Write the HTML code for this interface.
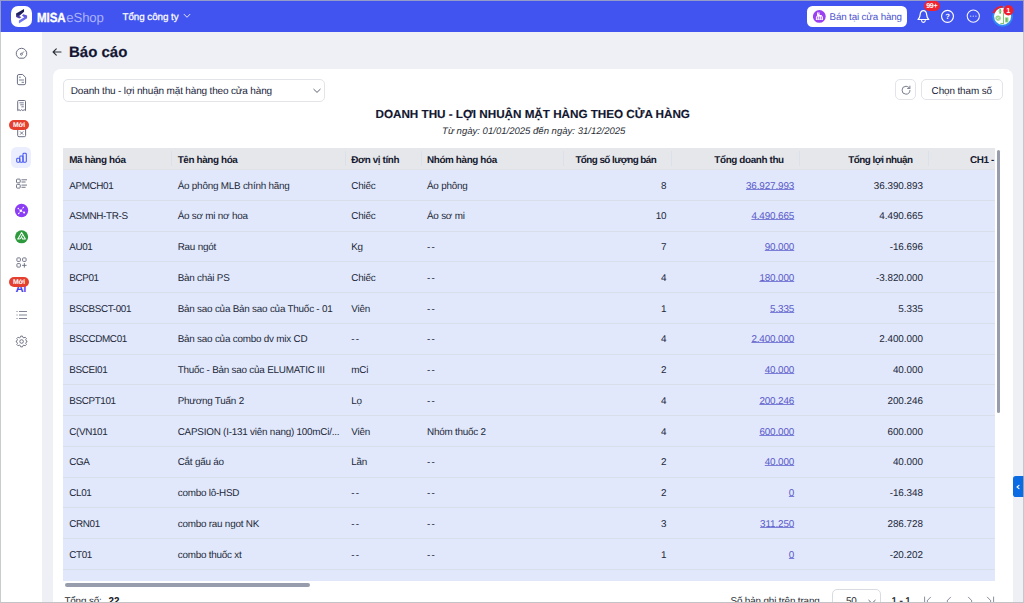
<!DOCTYPE html>
<html lang="vi">
<head>
<meta charset="utf-8">
<title>Báo cáo - MISA eShop</title>
<style>
*{box-sizing:border-box;margin:0;padding:0}
html,body{width:1024px;height:603px;overflow:hidden;background:#eff0f5;font-family:"Liberation Sans",sans-serif;color:#1f2229;text-rendering:geometricPrecision}
body{position:relative}
.abs{position:absolute}
#frame{position:absolute;left:0;top:0;width:1024px;height:603px;border:1px solid rgba(182,184,186,.72);border-bottom:1.5px solid #c3c3c5;z-index:50;pointer-events:none}
#hdr{position:absolute;left:0;top:0;width:1024px;height:31.5px;background:#4254f0}
#side{position:absolute;left:0;top:31.5px;width:42px;height:572px;background:#fff}
#logo{position:absolute;left:11px;top:6px;width:21px;height:20.5px;border-radius:6.5px;background:#fff}
.brand{position:absolute;top:9.5px;left:37.1px;font-size:13.2px;line-height:15px;color:#fff;white-space:nowrap}
.brand b{display:inline-block;transform-origin:0 50%;transform:scaleX(.875);letter-spacing:-0.1px;margin-right:-4.3px;-webkit-text-stroke:.35px #fff}
.brand span{color:rgba(255,255,255,.56);letter-spacing:-0.12px;margin-left:.9px}
#logo{height:21px;border-radius:7px}
.org{position:absolute;left:122.5px;top:12px;font-size:9.8px;line-height:12px;color:#fff;white-space:nowrap;letter-spacing:-0.05px;-webkit-text-stroke:.25px #fff}
.ttl{position:absolute;left:69px;top:42.6px;-webkit-text-stroke:.2px #121632;font-size:15px;line-height:20px;font-weight:bold;color:#121632;white-space:nowrap}
#card{position:absolute;left:52.5px;top:69px;width:960.5px;height:560px;background:#fff;border-radius:8px}
.sel{position:absolute;left:63px;top:79px;width:262px;height:22.8px;border:1px solid #e2e4ea;border-radius:5px;background:#fff;font-size:10px;letter-spacing:-0.165px;line-height:23.4px;overflow:hidden;padding-left:6.8px;color:#20253a;white-space:nowrap}
.btn{position:absolute;top:79.1px;height:20.8px;border:1px solid #e2e4ea;border-radius:5px;background:#fff;font-size:9.9px;letter-spacing:-0.1px;line-height:24.4px;overflow:hidden;text-align:center;color:#20253a;white-space:nowrap}
.rt{position:absolute;left:52.5px;width:960.5px;text-align:center;white-space:nowrap}
.rt1{top:107.1px;font-size:11.7px;line-height:16px;font-weight:bold;color:#131730;letter-spacing:-0.02px;-webkit-text-stroke:.15px #131730}
.rt2{top:124.5px;padding-left:2px;font-size:9.55px;line-height:13px;font-style:italic;color:#2a2d35}

#tbl{position:absolute;left:63.1px;top:148.25px;width:931.5px;height:432.4px;overflow:hidden;background:#e1e8fb;font-size:9.9px}
.thead{position:absolute;left:0;top:0;width:1000px;height:21.25px;background:#e6e7eb;border-bottom:1px solid #e0e2e8}
.th{position:absolute;top:0;height:22px;line-height:25.2px;font-weight:bold;color:#15192e;white-space:nowrap;padding:0 5.5px;font-size:9.9px;letter-spacing:-0.37px}
.th:before{content:"";position:absolute;left:-.3px;top:3.2px;height:14.6px;width:1px;background:#dce0ea}
.th.c1:before{display:none}
.tr{position:absolute;left:0;width:1000px;height:31.3px;border-bottom:1px solid #d9deeb}
.td{position:absolute;top:0;height:32px;line-height:34.5px;white-space:nowrap;padding:0 5.5px;color:#23283a;overflow:hidden;letter-spacing:-0.22px}
.td a{color:#5a5bca;text-decoration:underline;text-decoration-color:#7b7fd8;text-decoration-thickness:1px;text-underline-offset:0px;text-decoration-skip-ink:none}
.c1{left:0;width:108.4px}
.th.c1,.td.c1{padding-left:6.15px}
.c2{left:108.4px;width:174.25px}
.c3{left:282.65px;width:75.75px}
.c4{left:358.4px;width:141.5px}
.c5{left:499.9px;width:108.75px;text-align:right}
.c6{left:608.65px;width:128px;text-align:right}
.c7{left:736.65px;width:128.75px;text-align:right}
.c8{left:865.4px;width:140px;text-align:right}
.th.c5,.th.c6,.th.c7{padding-right:16px}
.th.c5{letter-spacing:-0.57px;padding-right:15.6px}
.th.c7{letter-spacing:-0.54px}
.th.c2,.td.c2{padding-left:6.2px}
.th.c8{text-align:left;padding-left:41.5px}
.td.c5,.td.c6,.td.c7{padding-right:5.5px}
.td.c1{letter-spacing:-0.36px}
.td.c6{letter-spacing:-0.12px}
.td.c7{letter-spacing:-0.02px}

.moi{position:absolute;width:19.6px;height:10.3px;border-radius:5.2px;background:#e5402f;color:#fff;font-size:6.9px;line-height:11.3px;font-weight:bold;text-align:center;letter-spacing:-0.25px}

.ft{position:absolute;top:595.6px;font-size:9.9px;letter-spacing:-0.15px;line-height:12px;color:#2a2d35;white-space:nowrap}
.td .dd{letter-spacing:1.2px}
</style>
</head>
<body>
<div id="hdr"></div>
<div id="side"></div>
<div id="logo"></div>
<div class="brand"><b class="m">MISA</b><span class="m">eShop</span></div>
<div class="org"><span class="m">Tổng công ty</span></div>
<div class="ttl"><span class="m">Báo cáo</span></div>
<div id="card"></div>
<div class="sel"><span class="m">Doanh thu - lợi nhuận mặt hàng theo cửa hàng</span></div>
<div class="btn" style="left:895px;width:21px"></div>
<div class="btn" style="left:921px;width:81.5px"><span class="m">Chọn tham số</span></div>
<div class="rt rt1"><span class="m">DOANH THU - LỢI NHUẬN MẶT HÀNG THEO CỬA HÀNG</span></div>
<div class="rt rt2"><span class="m">Từ ngày: 01/01/2025 đến ngày: 31/12/2025</span></div>
<!--TABLE-->
<div id="tbl">
<div class="thead">
<div class="th c1"><span>Mã hàng hóa</span></div>
<div class="th c2"><span>Tên hàng hóa</span></div>
<div class="th c3"><span>Đơn vị tính</span></div>
<div class="th c4"><span>Nhóm hàng hóa</span></div>
<div class="th c5"><span>Tổng số lượng bán</span></div>
<div class="th c6"><span>Tổng doanh thu</span></div>
<div class="th c7"><span>Tổng lợi nhuận</span></div>
<div class="th c8"><span>CH1 - </span></div>
</div>
<div class="tr" style="top:21.25px">
<div class="td c1"><span>APMCH01</span></div>
<div class="td c2"><span>Áo phông MLB chính hãng</span></div>
<div class="td c3"><span>Chiếc</span></div>
<div class="td c4"><span>Áo phông</span></div>
<div class="td c5"><span>8</span></div>
<div class="td c6"><a>36.927.993</a></div>
<div class="td c7"><span>36.390.893</span></div>
<div class="td c8"></div>
</div>
<div class="tr" style="top:52.00px">
<div class="td c1"><span>ASMNH-TR-S</span></div>
<div class="td c2"><span>Áo sơ mi nơ hoa</span></div>
<div class="td c3"><span>Chiếc</span></div>
<div class="td c4"><span>Áo sơ mi</span></div>
<div class="td c5"><span>10</span></div>
<div class="td c6"><a>4.490.665</a></div>
<div class="td c7"><span>4.490.665</span></div>
<div class="td c8"></div>
</div>
<div class="tr" style="top:82.75px">
<div class="td c1"><span>AU01</span></div>
<div class="td c2"><span>Rau ngót</span></div>
<div class="td c3"><span>Kg</span></div>
<div class="td c4"><span class="dd">--</span></div>
<div class="td c5"><span>7</span></div>
<div class="td c6"><a>90.000</a></div>
<div class="td c7"><span>-16.696</span></div>
<div class="td c8"></div>
</div>
<div class="tr" style="top:113.50px">
<div class="td c1"><span>BCP01</span></div>
<div class="td c2"><span>Bàn chải PS</span></div>
<div class="td c3"><span>Chiếc</span></div>
<div class="td c4"><span class="dd">--</span></div>
<div class="td c5"><span>4</span></div>
<div class="td c6"><a>180.000</a></div>
<div class="td c7"><span>-3.820.000</span></div>
<div class="td c8"></div>
</div>
<div class="tr" style="top:144.25px">
<div class="td c1"><span>BSCBSCT-001</span></div>
<div class="td c2"><span>Bản sao của Bản sao của Thuốc - 01</span></div>
<div class="td c3"><span>Viên</span></div>
<div class="td c4"><span class="dd">--</span></div>
<div class="td c5"><span>1</span></div>
<div class="td c6"><a>5.335</a></div>
<div class="td c7"><span>5.335</span></div>
<div class="td c8"></div>
</div>
<div class="tr" style="top:175.00px">
<div class="td c1"><span>BSCCDMC01</span></div>
<div class="td c2"><span>Bản sao của combo dv mix CD</span></div>
<div class="td c3"><span class="dd">--</span></div>
<div class="td c4"><span class="dd">--</span></div>
<div class="td c5"><span>4</span></div>
<div class="td c6"><a>2.400.000</a></div>
<div class="td c7"><span>2.400.000</span></div>
<div class="td c8"></div>
</div>
<div class="tr" style="top:205.75px">
<div class="td c1"><span>BSCEI01</span></div>
<div class="td c2"><span>Thuốc - Bản sao của ELUMATIC III</span></div>
<div class="td c3"><span>mCi</span></div>
<div class="td c4"><span class="dd">--</span></div>
<div class="td c5"><span>2</span></div>
<div class="td c6"><a>40.000</a></div>
<div class="td c7"><span>40.000</span></div>
<div class="td c8"></div>
</div>
<div class="tr" style="top:236.50px">
<div class="td c1"><span>BSCPT101</span></div>
<div class="td c2"><span>Phương Tuấn 2</span></div>
<div class="td c3"><span>Lọ</span></div>
<div class="td c4"><span class="dd">--</span></div>
<div class="td c5"><span>4</span></div>
<div class="td c6"><a>200.246</a></div>
<div class="td c7"><span>200.246</span></div>
<div class="td c8"></div>
</div>
<div class="tr" style="top:267.25px">
<div class="td c1"><span>C(VN101</span></div>
<div class="td c2"><span>CAPSION (I-131 viên nang) 100mCi/...</span></div>
<div class="td c3"><span>Viên</span></div>
<div class="td c4"><span>Nhóm thuốc 2</span></div>
<div class="td c5"><span>4</span></div>
<div class="td c6"><a>600.000</a></div>
<div class="td c7"><span>600.000</span></div>
<div class="td c8"></div>
</div>
<div class="tr" style="top:298.00px">
<div class="td c1"><span>CGA</span></div>
<div class="td c2"><span>Cắt gấu áo</span></div>
<div class="td c3"><span>Lần</span></div>
<div class="td c4"><span class="dd">--</span></div>
<div class="td c5"><span>2</span></div>
<div class="td c6"><a>40.000</a></div>
<div class="td c7"><span>40.000</span></div>
<div class="td c8"></div>
</div>
<div class="tr" style="top:328.75px">
<div class="td c1"><span>CL01</span></div>
<div class="td c2"><span>combo lô-HSD</span></div>
<div class="td c3"><span class="dd">--</span></div>
<div class="td c4"><span class="dd">--</span></div>
<div class="td c5"><span>2</span></div>
<div class="td c6"><a>0</a></div>
<div class="td c7"><span>-16.348</span></div>
<div class="td c8"></div>
</div>
<div class="tr" style="top:359.50px">
<div class="td c1"><span>CRN01</span></div>
<div class="td c2"><span>combo rau ngot NK</span></div>
<div class="td c3"><span class="dd">--</span></div>
<div class="td c4"><span class="dd">--</span></div>
<div class="td c5"><span>3</span></div>
<div class="td c6"><a>311.250</a></div>
<div class="td c7"><span>286.728</span></div>
<div class="td c8"></div>
</div>
<div class="tr" style="top:390.25px">
<div class="td c1"><span>CT01</span></div>
<div class="td c2"><span>combo thuốc xt</span></div>
<div class="td c3"><span class="dd">--</span></div>
<div class="td c4"><span class="dd">--</span></div>
<div class="td c5"><span>1</span></div>
<div class="td c6"><a>0</a></div>
<div class="td c7"><span>-20.202</span></div>
<div class="td c8"></div>
</div>
<div class="tr" style="top:421.00px"></div>
</div>
<!--/TABLE-->

<!--ICONS-->
<svg class="abs" style="left:11px;top:6px" width="21" height="21" viewBox="0 0 21 21">
<defs><linearGradient id="lg1" x1="0" y1="0" x2="0" y2="1"><stop offset="0" stop-color="#5a4fd6"/><stop offset="1" stop-color="#7a86fa"/></linearGradient>
<linearGradient id="lg2" x1="0" y1="0" x2="0" y2="1"><stop offset="0" stop-color="#14183f"/><stop offset=".55" stop-color="#1f2262"/><stop offset="1" stop-color="#6a4fd0"/></linearGradient></defs>
<path d="M13.05 2.98 L5.1 7.6 L5.1 10.9 L8.2 12.5 L10.5 11.3 L8.2 9.95 L13.05 5.8 Z" fill="url(#lg2)"/>
<path d="M12.35 8.3 L16.1 9.5 L16.1 12.3 L7.9 17.6 L7.9 14.6 L13.3 11.3 L10.95 9.5 Z" fill="url(#lg1)"/>
</svg>
<!-- org chevron -->
<svg class="abs" style="left:182.8px;top:12.2px" width="8" height="8" viewBox="0 0 8 8"><path d="M1.1 2.3 L4 5.3 L6.9 2.3" fill="none" stroke="#fff" stroke-width="1" stroke-linecap="round" stroke-linejoin="round" opacity=".85"/></svg>
<!-- back arrow -->
<svg class="abs" style="left:50.6px;top:46px" width="12" height="12" viewBox="0 0 12 12"><path d="M10 6 H2.2 M5.3 2.8 L2.1 6 L5.3 9.2" fill="none" stroke="#2a2d36" stroke-width="1.1" stroke-linecap="round" stroke-linejoin="round"/></svg>
<!-- sell at store -->
<div class="abs" style="left:807.3px;top:5.8px;width:100px;height:21.1px;border-radius:5.5px;background:#fff"></div>
<svg class="abs" style="left:813.2px;top:9.7px" width="13" height="13" viewBox="0 0 13 13"><circle cx="6.35" cy="6.45" r="6.4" fill="#9a3ff2"/>
<path d="M2.9 10.1 V6.9 L4.3 5 H8.5 L9.9 6.9 V10.1 Z" fill="#fff"/><path d="M4 2.5 H6.6 V5 H4 Z" fill="#fff"/><path d="M4.7 3.4 H5.9" stroke="#9a3ff2" stroke-width=".5"/>
<g fill="#9a3ff2"><rect x="3.8" y="6.7" width="1.3" height=".95"/><rect x="5.75" y="6.7" width="1.3" height=".95"/><rect x="7.7" y="6.7" width="1.3" height=".95"/><rect x="3.8" y="8.4" width="1.3" height=".95"/><rect x="5.75" y="8.4" width="1.3" height=".95"/><rect x="7.7" y="8.4" width="1.3" height=".95"/></g></svg>
<div class="abs" style="left:829.5px;top:11.8px;font-size:9.8px;letter-spacing:-0.14px;line-height:12px;color:#4b52cf;white-space:nowrap"><span class="m">Bán tại cửa hàng</span></div>
<!-- bell -->
<svg class="abs" style="left:916px;top:8px" width="15" height="16" viewBox="0 0 15 16"><path d="M2 11.5 C3.6 10.6 3.9 9 4.1 6.9 C4.3 4.3 5.4 2.6 7.4 2.6 C9.4 2.6 10.5 4.3 10.7 6.9 C10.9 9 11.2 10.6 12.8 11.5 Z" fill="none" stroke="#fff" stroke-width="1.2" stroke-linejoin="round"/><path d="M5.5 12.5 C5.8 14.9 9 14.9 9.3 12.5" fill="none" stroke="#fff" stroke-width="1.15" stroke-linecap="round"/></svg>
<div class="abs" style="left:924px;top:.9px;width:15.6px;height:10px;border-radius:5px;background:#f0232f;color:#fff;font-size:7.1px;line-height:10.2px;font-weight:bold;text-align:center;letter-spacing:-0.25px">99+</div>
<!-- help -->
<svg class="abs" style="left:940px;top:9px" width="15" height="15" viewBox="0 0 15 15"><circle cx="7.5" cy="7.35" r="5.95" fill="none" stroke="#fff" stroke-width="1.15"/><text x="7.5" y="9.9" font-family="Liberation Sans, sans-serif" font-weight="bold" font-size="7.6" fill="#fff" text-anchor="middle">?</text></svg>
<!-- more -->
<svg class="abs" style="left:966px;top:9px" width="15" height="15" viewBox="0 0 15 15"><circle cx="7.3" cy="7.1" r="6.1" fill="none" stroke="#fff" stroke-width="1.05" opacity=".95"/><circle cx="4.7" cy="7.2" r=".65" fill="#cfd4ff"/><circle cx="7.3" cy="7.2" r=".65" fill="#cfd4ff"/><circle cx="9.9" cy="7.2" r=".65" fill="#cfd4ff"/></svg>
<!-- avatar -->
<svg class="abs" style="left:991px;top:5px" width="24" height="24" viewBox="0 0 24 24">
<circle cx="11.6" cy="11.3" r="9.5" fill="#fbfdfb" stroke="#2f8af2" stroke-width="1.9"/>
<path d="M2.57 8.19 A9.55 9.55 0 0 1 11.93 1.76" fill="none" stroke="#ee1c2c" stroke-width="2.1"/>
<path d="M12.5 7.6 V18.6 M9.4 18.5 h3.6" stroke="#7fc774" stroke-width="1" fill="none"/>
<circle cx="7.1" cy="13.1" r="2.7" fill="#8fd085"/><path d="M5.6 14.2 L8.5 12" stroke="#e9f6e6" stroke-width=".8"/><circle cx="6.1" cy="12.3" r=".5" fill="#f3e9c8"/><circle cx="8" cy="14.3" r=".5" fill="#f3e9c8"/>
<path d="M14.1 12.4 h3.3 v5 h-3.3 z" fill="#8fd085"/><path d="M15.6 13 v3.6" stroke="#5db653" stroke-width=".9"/>
<path d="M9.2 4.2 v4.4" stroke="#62b957" stroke-width="1.7"/><path d="M7.2 6.2 h4" stroke="#a8dba0" stroke-width=".9"/>
<circle cx="17.4" cy="5.4" r="5.05" fill="#f01d2c"/>
<text x="17.2" y="8.1" font-family="Liberation Sans, sans-serif" font-weight="bold" font-size="7.4" fill="#fff" text-anchor="middle">1</text>
</svg>
<!-- select chevron -->
<svg class="abs" style="left:312.3px;top:86.4px" width="10" height="10" viewBox="0 0 10 10"><path d="M1.8 3.3 L5 6.4 L8.2 3.3" fill="none" stroke="#5e6372" stroke-width="1" stroke-linecap="round" stroke-linejoin="round"/></svg>
<!-- refresh -->
<svg class="abs" style="left:900.5px;top:84.7px" width="10" height="10" viewBox="0 0 24 24"><g fill="none" stroke="#747989" stroke-width="2.3" stroke-linecap="round" stroke-linejoin="round"><path d="M21.5 13a9.5 9.5 0 1 1-9.5-10c2.6 0 5 1 6.8 2.8L21 8"/><path d="M21.3 2.6v5.6h-5.6"/></g></svg>
<!--/ICONS-->
<!--SIDE-->
<!-- 1 gauge -->
<svg class="abs" style="left:15px;top:46.5px" width="13" height="13" viewBox="0 0 13 13"><path d="M4.1 11.2 A5.25 5.25 0 1 1 8.9 11.2 Z" fill="none" stroke="#6a6f82" stroke-width="1" stroke-linejoin="round"/><circle cx="6.4" cy="7.2" r="1" fill="none" stroke="#6a6f82" stroke-width=".9"/><path d="M7.1 6.5 L8.6 4.8" stroke="#6a6f82" stroke-width=".9" stroke-linecap="round"/></svg>
<!-- 2 doc -->
<svg class="abs" style="left:15px;top:72.5px" width="13" height="13" viewBox="0 0 13 13"><path d="M3.9 1.5 H7.6 L10.6 4.4 V10.2 Q10.6 11.7 9.1 11.7 H3.9 Q2.4 11.7 2.4 10.2 V3 Q2.4 1.5 3.9 1.5 Z" fill="none" stroke="#6a6f82" stroke-width="1" stroke-linejoin="round"/><path d="M4.4 7 H8.6 M7 9.3 H8.6 M4.4 4.2 H5.4" stroke="#6a6f82" stroke-width=".9" stroke-linecap="round"/></svg>
<!-- 3 receipt -->
<svg class="abs" style="left:15px;top:98.5px" width="13" height="13" viewBox="0 0 13 13"><path d="M2.7 11.6 V2.4 Q2.7 1.5 3.6 1.5 H9.6 Q10.5 1.5 10.5 2.4 V11.6 L9.2 10.7 L7.9 11.6 L6.6 10.7 L5.3 11.6 L4 10.7 Z" fill="none" stroke="#6a6f82" stroke-width="1" stroke-linejoin="round"/><path d="M4.8 3.8 H8.4 M5.6 5.8 H8.4 M6.8 7.8 H8.4" stroke="#6a6f82" stroke-width=".9" stroke-linecap="round"/></svg>
<!-- 4 doc x + badge -->
<svg class="abs" style="left:15px;top:124.5px" width="13" height="13" viewBox="0 0 13 13"><rect x="2.7" y="1.5" width="7.9" height="10.2" rx="1.3" fill="none" stroke="#6a6f82" stroke-width="1"/><path d="M5.3 6.7 L8 9.4 M8 6.7 L5.3 9.4" stroke="#6a6f82" stroke-width=".9" stroke-linecap="round"/></svg>
<div class="moi" style="left:9.2px;top:119.9px">Mới</div>
<!-- 5 active chart -->
<div class="abs" style="left:11.2px;top:147.3px;width:20.3px;height:21px;border-radius:5.5px;background:#ebeefe"></div>
<svg class="abs" style="left:15px;top:151px" width="13" height="13" viewBox="0 0 13 13"><g fill="none" stroke="#4658f1" stroke-width="1.05" stroke-linejoin="round"><rect x="1.7" y="7.3" width="3.1" height="3.9" rx=".9"/><rect x="4.8" y="4.9" width="3.2" height="6.3" rx=".9"/><rect x="8" y="2.3" width="3.3" height="8.9" rx=".9"/></g></svg>
<!-- 6 checklist -->
<svg class="abs" style="left:15px;top:177.2px" width="13" height="13" viewBox="0 0 13 13"><g fill="none" stroke="#6a6f82" stroke-width=".95"><rect x="1.5" y="2.1" width="3.7" height="3.7" rx=".8"/><rect x="1.5" y="7.4" width="3.7" height="3.7" rx=".8"/><path d="M6.9 2.8 H11.6 M6.9 5 H10.2 M6.9 8.1 H11.6 M6.9 10.3 H10.2" stroke-linecap="round"/></g></svg>
<!-- 7 purple -->
<svg class="abs" style="left:14px;top:202.5px" width="15" height="15" viewBox="0 0 15 15"><circle cx="7.55" cy="7.5" r="6.65" fill="#8b3df6"/><path d="M4.3 5.6 L6.8 7.8 L9.3 4.5 M6.8 7.8 L10.1 9.6 M6.8 7.8 L4.7 10.6" stroke="#e9d8ff" stroke-width=".55" fill="none"/><g fill="#fff"><circle cx="6.8" cy="7.8" r="1.25"/><circle cx="4.3" cy="5.6" r=".75"/><circle cx="9.3" cy="4.5" r=".7"/><circle cx="10.1" cy="9.6" r="1"/><circle cx="4.7" cy="10.6" r=".75"/></g></svg>
<!-- 8 green -->
<svg class="abs" style="left:14px;top:228.8px" width="15" height="15" viewBox="0 0 15 15"><circle cx="7.6" cy="7.8" r="6.55" fill="#2c9a3d"/><path d="M3.9 9.9 L7.6 3.5 L11.4 9.9 H8.6 L7.7 8.3" fill="none" stroke="#fff" stroke-width="1.05" stroke-linejoin="round" stroke-linecap="round"/><path d="M3.9 9.9 H6.3 L8.3 6.2" fill="none" stroke="#fff" stroke-width=".95" stroke-linejoin="round" stroke-linecap="round"/></svg>
<!-- 9 grid plus -->
<svg class="abs" style="left:15px;top:256px" width="13" height="13" viewBox="0 0 13 13"><g fill="none" stroke="#6a6f82" stroke-width=".95"><rect x="1.9" y="1.9" width="3.5" height="3.5" rx=".8"/><rect x="7.6" y="1.9" width="3.5" height="3.5" rx=".8"/><rect x="1.9" y="7.6" width="3.5" height="3.5" rx=".8"/><path d="M9.35 7.5 V11.2 M7.5 9.35 H11.2" stroke-linecap="round"/></g></svg>
<!-- 10 AI -->
<div class="abs" style="left:15.5px;top:283.1px;font-size:11.3px;line-height:12px;font-weight:bold;color:#4044ee;letter-spacing:-0.3px">A<span style="color:#7a46ee">I</span></div>
<div class="moi" style="left:9.2px;top:276.9px">Mới</div>
<!-- 11 list -->
<svg class="abs" style="left:15px;top:308px" width="13" height="13" viewBox="0 0 13 13"><g stroke="#6a6f82" stroke-width=".85" stroke-linecap="round"><path d="M4.4 3.5 H11.6 M4.4 7 H11.6 M4.4 10.5 H11.6"/><path d="M1.9 3.5 H2.2 M1.9 7 H2.2 M1.9 10.5 H2.2"/></g></svg>
<!-- 12 gear -->
<svg class="abs" style="left:15px;top:334.6px" width="13" height="13" viewBox="0 0 13 13"><g transform="translate(6.6,6.5)"><path d="M-0.9 -5.2 H0.9 L1.3 -3.9 L2.4 -3.4 L3.6 -4.1 L4.9 -2.8 L4.2 -1.6 L4.6 -0.6 L5.4 -0.3 V0.9 L4.6 1.2 L4.2 2.2 L4.9 3.4 L3.6 4.7 L2.4 4 L1.3 4.5 L0.9 5.8 H-0.9 L-1.3 4.5 L-2.4 4 L-3.6 4.7 L-4.9 3.4 L-4.2 2.2 L-4.6 1.2 L-5.4 0.9 V-0.3 L-4.6 -0.6 L-4.2 -1.6 L-4.9 -2.8 L-3.6 -4.1 L-2.4 -3.4 L-1.3 -3.9 Z" transform="translate(0,-.3) scale(.98)" fill="none" stroke="#6a6f82" stroke-width=".95" stroke-linejoin="round"/><circle cx="0" cy="0" r="1.8" fill="none" stroke="#6a6f82" stroke-width=".95"/></g></svg>
<!-- right tab -->
<div class="abs" style="left:1012.9px;top:475.9px;width:11.1px;height:21px;border-radius:2.8px 0 0 2.8px;background:#0b6be3"></div>
<svg class="abs" style="left:1013.7px;top:482.5px" width="8" height="8" viewBox="0 0 8 8"><path d="M5 2.4 L3 4 L5 5.6" fill="none" stroke="#fff" stroke-width="1.1" stroke-linecap="round" stroke-linejoin="round"/></svg>
<!--/SIDE-->



<!--FOOT-->
<div class="abs" style="left:996.5px;top:150.2px;width:3.8px;height:263.3px;border-radius:2px;background:#989dad"></div>
<div class="abs" style="left:65.4px;top:582.8px;width:245px;height:4px;border-radius:2px;background:#989dad"></div>
<div class="ft" style="left:64.4px"><span class="m">Tổng số:</span></div>
<div class="ft" style="left:108.6px;font-weight:bold;color:#16181f"><span class="m">22</span></div>
<div class="ft" style="left:730.5px"><span class="m">Số bản ghi trên trang</span></div>
<div class="abs" style="left:831.5px;top:589.4px;width:49px;height:24px;border:1px solid #d9dbe2;border-radius:5px;background:#fff"></div>
<div class="ft" style="left:846px"><span class="m">50</span></div>
<svg class="abs" style="left:867.3px;top:596.6px" width="10" height="10" viewBox="0 0 10 10"><path d="M1.8 3.3 L5 6.4 L8.2 3.3" fill="none" stroke="#5e6372" stroke-width="1" stroke-linecap="round" stroke-linejoin="round"/></svg>
<div class="ft" style="left:891.5px;color:#16181f;-webkit-text-stroke:.25px #16181f"><span class="m">1 - 1</span></div>
<svg class="abs" style="left:922px;top:595.2px" width="76" height="12" viewBox="0 0 76 12"><g fill="none" stroke="#8a8fa0" stroke-width="1" stroke-linecap="round" stroke-linejoin="round"><path d="M2.6 2 V10 M8.6 2.2 L4.9 6 L8.6 9.8"/><path d="M28.6 2.2 L24.9 6 L28.6 9.8"/><path d="M46.4 2.2 L50.1 6 L46.4 9.8"/><path d="M65.4 2.2 L69.1 6 L65.4 9.8 M71.6 2 V10"/></g></svg>
<!--/FOOT-->
<div id="frame"></div>
</body>
</html>
